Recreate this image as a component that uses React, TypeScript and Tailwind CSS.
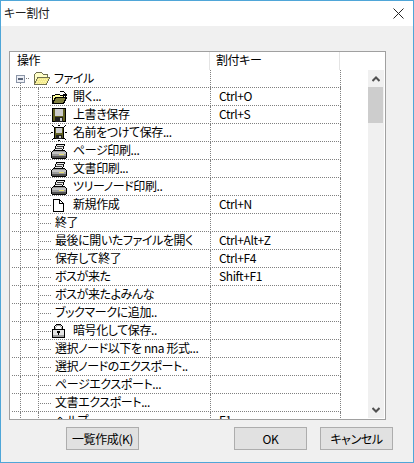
import React from "react";

const font = "font-['Noto_Sans_CJK_JP','Noto_Sans',sans-serif]";

function FolderYellow() {
  return (
    <svg width="17" height="15" viewBox="0 0 17 15" shapeRendering="crispEdges" className="shrink-0">
      <path d="M1.5 13.5V3.5L3.5 1.5H8.5L10.5 3.5H14.5V5.5" fill="#ffffc8" stroke="#707050" />
      <path d="M1.5 13.5L4.5 6.5H16.5L13.5 13.5Z" fill="#f4ec90" stroke="#707050" />
      <path d="M5 8H14M4 10H13M3 12H12" stroke="#fff8b0" strokeDasharray="1 1" />
    </svg>
  );
}

function FolderOpen() {
  return (
    <svg width="16" height="16" viewBox="0 0 16 16" shapeRendering="crispEdges" className="shrink-0">
      <path d="M9 2.5H12.5L14.5 4.5V6M13 5.5H16L14.5 7Z" fill="none" stroke="#000" />
      <path d="M1.5 14.5V6.5H3.5L4.5 5.5H8.5L9.5 6.5H12.5V8.5" fill="#ffff9c" stroke="#000" />
      <rect x="2" y="7" width="10" height="2" fill="#ffff9c" />
      <path d="M1.5 14.5L4.5 8.5H15.5L12.5 14.5Z" fill="#808040" stroke="#000" />
    </svg>
  );
}

function Floppy() {
  return (
    <svg width="16" height="16" viewBox="0 0 16 16" shapeRendering="crispEdges" className="shrink-0">
      <rect x="1" y="1" width="14" height="14" fill="#000" />
      <rect x="2" y="2" width="12" height="12" fill="#606020" />
      <rect x="4" y="2" width="8" height="7" fill="#cccccc" />
      <rect x="4" y="10" width="8" height="5" fill="#202020" />
      <rect x="9" y="11" width="2" height="3" fill="#cccccc" />
    </svg>
  );
}

function FloppySpark() {
  return (
    <svg width="16" height="16" viewBox="0 0 16 16" shapeRendering="crispEdges" className="shrink-0">
      <path d="M1 0h1v1H1zM2 1h1v1H2zM14 0h1v1h-1zM13 1h1v1h-1zM0 7h2v1H0zM14 7h2v1h-2zM1 14h1v1H1zM2 13h1v1H2zM14 14h1v1h-1zM13 13h1v1h-1zM7 0h2v1H7zM7 15h2v1H7z" fill="#000" />
      <rect x="3" y="2" width="10" height="12" fill="#000" />
      <rect x="4" y="3" width="8" height="10" fill="#606020" />
      <rect x="5" y="3" width="6" height="5" fill="#cccccc" />
      <rect x="5" y="10" width="6" height="4" fill="#202020" />
      <rect x="8" y="11" width="2" height="2" fill="#cccccc" />
    </svg>
  );
}

function Printer() {
  return (
    <svg width="16" height="15" viewBox="0 0 16 15" shapeRendering="crispEdges" className="shrink-0">
      <path d="M5.5 0.5H13.5L11.5 6.5H3.5Z" fill="#e8e8e8" stroke="#000" />
      <path d="M6 2.5H12M5 4.5H11" stroke="#404040" />
      <path d="M2.5 6.5H13.5L15.5 8.5V12.5L14.5 14.5H1.5L0.5 12.5V8.5Z" fill="#9a9a9a" stroke="#000" />
      <rect x="1" y="8" width="14" height="2" fill="#c4c4c4" />
      <rect x="1" y="12" width="14" height="2" fill="#505050" />
      <rect x="8" y="10" width="5" height="1" fill="#e8e070" />
    </svg>
  );
}

function Doc() {
  return (
    <svg width="16" height="16" viewBox="0 0 16 16" shapeRendering="crispEdges" className="shrink-0">
      <path d="M2.5 2.5H8.5L12.5 6.5V14.5H2.5Z" fill="#fff" stroke="#000" />
      <path d="M8.5 2.5V6.5H12.5" fill="none" stroke="#000" />
    </svg>
  );
}

function Lock() {
  return (
    <svg width="16" height="16" viewBox="0 0 16 16" shapeRendering="crispEdges" className="shrink-0">
      <path d="M3.5 7V3.5L5.5 1.5H9.5L11.5 3.5V7" fill="none" stroke="#000" />
      <path d="M4.5 7V4.5L6 2.5H9L10.5 4.5V7" fill="none" stroke="#a8a8a8" />
      <rect x="1.5" y="6.5" width="12" height="8" fill="#e4e4e4" stroke="#000" />
      <rect x="2" y="12" width="11" height="2" fill="#a0a0a0" />
      <rect x="6" y="8" width="3" height="2" fill="#000" />
      <rect x="7" y="10" width="1" height="2" fill="#000" />
    </svg>
  );
}

function Expander() {
  return (
    <svg width="21" height="17" viewBox="0 0 21 17" shapeRendering="crispEdges" className="shrink-0">
      <rect x="4.5" y="5.5" width="8" height="7" fill="#eef0f6" stroke="#8c96a8" />
      <rect x="6" y="8" width="5" height="2" fill="#5a6478" />
      <path d="M14 8.5H18" stroke="#808080" strokeDasharray="1 1" />
      <path d="M8.5 13V17" stroke="#808080" strokeDasharray="1 1" />
    </svg>
  );
}

type Item = { label: string; key?: string; icon?: React.ReactNode };

const items: Item[] = [
  { label: "開く...", key: "Ctrl+O", icon: <FolderOpen /> },
  { label: "上書き保存", key: "Ctrl+S", icon: <Floppy /> },
  { label: "名前をつけて保存...", icon: <FloppySpark /> },
  { label: "ページ印刷...", icon: <Printer /> },
  { label: "文書印刷...", icon: <Printer /> },
  { label: "ツリーノード印刷..", icon: <Printer /> },
  { label: "新規作成", key: "Ctrl+N", icon: <Doc /> },
  { label: "終了" },
  { label: "最後に開いたファイルを開く", key: "Ctrl+Alt+Z" },
  { label: "保存して終了", key: "Ctrl+F4" },
  { label: "ボスが来た", key: "Shift+F1" },
  { label: "ボスが来たよみんな" },
  { label: "ブックマークに追加.." },
  { label: "暗号化して保存..", icon: <Lock /> },
  { label: "選択ノード以下を nna 形式..." },
  { label: "選択ノードのエクスポート.." },
  { label: "ページエクスポート..." },
  { label: "文書エクスポート..." },
  { label: "ヘルプ", key: "F1" },
];

function Btn({ children }: { children: React.ReactNode }) {
  return (
    <button className="w-[73px] h-[23px] border border-[#adadad] bg-[#e1e1e1] text-[12px] leading-none text-black flex items-center justify-center">
      {children}
    </button>
  );
}

function Row({ item }: { item: Item }) {
  return (
    <div className="h-[18px] shrink-0 w-[329px] ml-[2px] flex border-b border-dotted border-[#808080]">
      <div className="w-[198px] h-[18px] flex">
        <div className="ml-[8px] w-[18px] h-full border-l border-dotted border-[#808080]" />
        <div className="h-full flex-1 flex items-center border-l border-dotted border-[#808080] whitespace-nowrap">
          <div className="w-[11px] ml-[1px] border-t border-dotted border-[#808080]" />
          {item.icon ? (
            <>
              <div className="w-[16px] flex justify-center">{item.icon}</div>
              <span className="ml-[6px] -mt-[2px]">{item.label}</span>
            </>
          ) : (
            <span className="ml-[4px] -mt-[2px]">{item.label}</span>
          )}
        </div>
      </div>
      <div className="w-[131px] h-[18px] border-l border-r border-dotted border-[#808080] pl-[8px] pb-[2px] flex items-center">
        {item.key}
      </div>
    </div>
  );
}

export default function App() {
  return (
    <div
      className={`w-[414px] h-[463px] bg-[#f0f0f0] border border-[#4fa6d8] flex flex-col overflow-hidden text-black text-[12px] font-normal tracking-[-0.4px] [font-feature-settings:'palt'] ${font}`}
    >
      <div className="h-[25px] shrink-0 bg-white flex items-center justify-between pl-[3px] pr-[9px]">
        <span className="text-[#222] -mt-[1px]">キー割付</span>
        <svg width="11" height="11" viewBox="0 0 11 11" className="shrink-0">
          <path d="M0.5 0.5L10.5 10.5M10.5 0.5L0.5 10.5" stroke="#222" strokeWidth="1" />
        </svg>
      </div>
      <div className="flex-1 flex flex-col pt-[25px]">
        <div className="ml-[8px] w-[377px] h-[369px] shrink-0 bg-white border border-[#a0a0a0] flex flex-col overflow-hidden">
          <div className="h-[18px] shrink-0 flex items-center">
            <div className="w-[200px] h-full pl-[7px] pb-[2px] flex items-center border-r border-[#e4e4e4]">操作</div>
            <div className="w-[130px] h-full pl-[6px] pb-[2px] flex items-center border-r border-[#e4e4e4]">割付キー</div>
          </div>
          <div className="flex-1 flex overflow-hidden">
            <div className="w-[331px] h-[349px] flex flex-col overflow-hidden">
              <div className="h-[18px] shrink-0 w-[329px] ml-[2px] flex border-b border-dotted border-[#808080]">
                <div className="w-[198px] h-full flex items-center whitespace-nowrap">
                  <Expander />
                  <FolderYellow />
                  <span className="ml-[4px] -mt-[2px]">ファイル</span>
                </div>
                <div className="w-[131px] h-full border-l border-r border-dotted border-[#808080]" />
              </div>
              {items.map((it) => (
                <Row key={it.label} item={it} />
              ))}
            </div>
            <div className="ml-[27px] w-[16px] h-[348px] bg-[#f0f0f0] flex flex-col items-start">
              <div className="h-[17px] w-full shrink-0 flex items-center justify-center">
                <svg width="8" height="6" viewBox="0 0 8 6">
                  <path d="M0.5 5L4 1.5L7.5 5" fill="none" stroke="#505050" strokeWidth="2" />
                </svg>
              </div>
              <div className="h-[36px] w-[15px] shrink-0 bg-[#cdcdcd]" />
              <div className="flex-1" />
              <div className="h-[17px] w-full shrink-0 flex items-center justify-center">
                <svg width="8" height="6" viewBox="0 0 8 6">
                  <path d="M0.5 1L4 4.5L7.5 1" fill="none" stroke="#505050" strokeWidth="2" />
                </svg>
              </div>
            </div>
          </div>
        </div>
        <div className="flex mt-[7px] ml-[65px]">
          <Btn>一覧作成(K)</Btn>
          <div className="ml-[95px]">
            <Btn>OK</Btn>
          </div>
          <div className="ml-[13px]">
            <Btn>キャンセル</Btn>
          </div>
        </div>
      </div>
    </div>
  );
}
